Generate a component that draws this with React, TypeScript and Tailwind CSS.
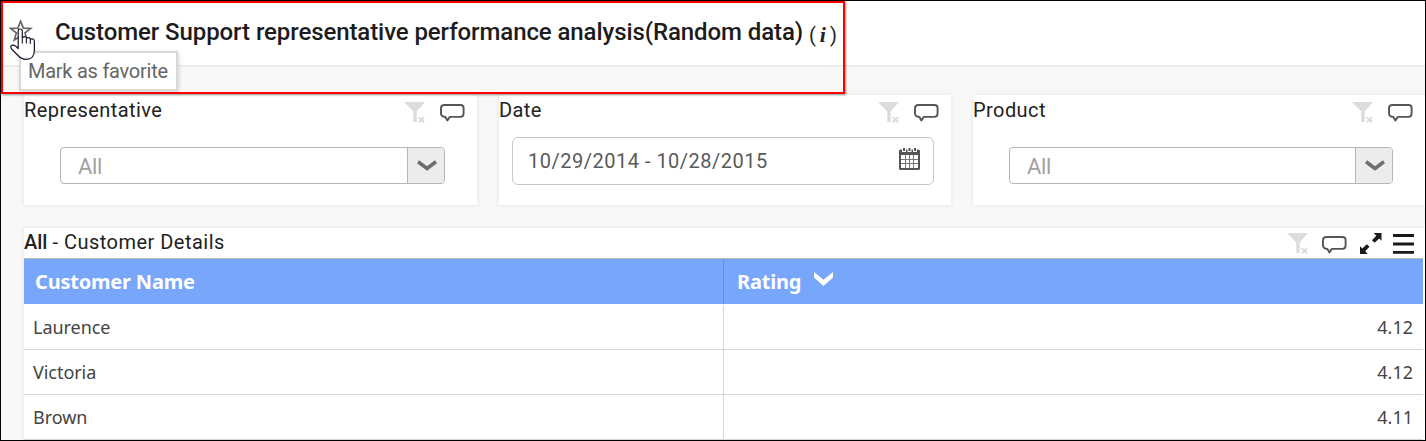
import React from "react";

const FilterOff = () => (
  <svg width="22" height="22" viewBox="0 0 22 22" className="shrink-0">
    <path d="M0 0H21L12.7 9.5V20H9.3V9.5Z" fill="#dcdcdc" />
    <path d="M14.7 15.2L20.2 20.2M20.2 15.2L14.7 20.2" stroke="#dcdcdc" strokeWidth="1.9" />
  </svg>
);

const Comment = () => (
  <svg width="25" height="18" viewBox="0 0 25 18" className="shrink-0">
    <path
      d="M4.5 1H20.5Q23.6 1 23.6 4V9.5Q23.6 12.7 20.5 12.9H9.8L7.4 16.5L5.4 13Q1 12.4 1 9.5V4Q1 1 4.5 1Z"
      fill="#fff"
      stroke="#555"
      strokeWidth="1.9"
      strokeLinejoin="round"
    />
  </svg>
);

const Calendar = () => (
  <svg width="21" height="22" viewBox="0 0 21 22" className="shrink-0">
    <path d="M0 3Q0 1.5 1.5 1.5H19.5Q21 1.5 21 3V20.5Q21 22 19.5 22H1.5Q0 22 0 20.5Z" fill="#555" />
    <path d="M2 7H19V20H2Z" fill="#fff" />
    <path d="M2 11.5H19M2 15.5H19M6.5 7V20M10.5 7V20M14.5 7V20" stroke="#777" strokeWidth="1" />
    <path d="M3 0H7V4H3ZM8.5 0H12.5V4H8.5ZM14 0H18V4H14Z" fill="#fff" />
    <path d="M4 0H6V3H4ZM9.5 0H11.5V3H9.5ZM15 0H17V3H15Z" fill="#555" />
  </svg>
);

const Chevron = () => (
  <svg width="20" height="11" viewBox="0 0 20 11">
    <path d="M1 1.8L10 8.4L19 1.8" fill="none" stroke="#6e6e6e" strokeWidth="3.6" />
  </svg>
);

const Expand = () => (
  <svg width="22" height="22" viewBox="0 0 22 22" className="shrink-0">
    <path d="M13.8 0H21.5V7.8L19.2 5.6L14.6 9.8L12 7.2L16.3 2.8Z" fill="#1a1a1a" />
    <path d="M7.7 21H0V13.2L2.3 15.4L6.9 11.2L9.5 13.8L5.2 18.2Z" fill="#1a1a1a" />
  </svg>
);

const Menu = () => (
  <svg width="21" height="20" viewBox="0 0 21 20" className="shrink-0">
    <path d="M0 1.5H21M0 10H21M0 18.4H21" stroke="#1a1a1a" strokeWidth="2.9" />
  </svg>
);

function Card({ title, children }: { title: string; children: React.ReactNode }) {
  return (
    <section className="h-[110px] bg-white shadow-[0_0_5px_rgba(0,0,0,0.09)]">
      <div className="flex h-[30px] items-center">
        <h2 className="text-[20px] tracking-[0.43px] text-[#222]">{title}</h2>
        <div className="mt-[6px] ml-auto mr-[12px] flex items-center gap-[14px]">
          <FilterOff />
          <Comment />
        </div>
      </div>
      {children}
    </section>
  );
}

function Dropdown() {
  return (
    <div className="mt-[22px] mr-[32px] ml-[36px] flex h-[37px] overflow-hidden rounded-[4px] border border-[#b5b5b5] bg-white">
      <div className="flex flex-1 items-center pt-[3px] pl-[17px] text-[22px] leading-none tracking-[-0.3px] text-[#a2a2a2]">All</div>
      <div className="flex w-[37px] items-center justify-center border-l border-[#b5b5b5] bg-[#ebecee] pl-[2px]">
        <Chevron />
      </div>
    </div>
  );
}

const rows = [
  ["Laurence", "4.12"],
  ["Victoria", "4.12"],
  ["Brown", "4.11"],
];

export default function App() {
  return (
    <div className="relative h-[441px] w-[1426px] overflow-hidden border border-black bg-[#f8f8f8] font-['Roboto',sans-serif]">
      <header className="flex h-[66px] items-center border-b-2 border-[#ececec] bg-white pl-[8px]">
        <svg width="24" height="24" viewBox="0 0 24 24" className="mb-[5px] shrink-0">
          <path d="M11.6 2.3L14.4 9.1L21.7 9.4L16 13.9L18 21L11.6 17L5.3 21L7.3 13.9L1.6 9.4L8.9 9.1Z" fill="#fff" stroke="#666" strokeWidth="1.7" />
        </svg>
        <h1 className="mb-[2px] ml-[22px] w-[750px] text-[24px] font-medium tracking-[-0.09px] whitespace-nowrap text-[#1c1c1c]">
          Customer Support representative performance analysis(Random data)
        </h1>
        <span className="mt-[3px] ml-[4px] flex items-baseline gap-[4px] text-[20px] text-[#222]">
          <span>(</span>
          <span className="font-['Liberation_Serif',serif] text-[22px] font-bold italic">i</span>
          <span>)</span>
        </span>
      </header>

      <main className="pt-[28px] pl-[23px]">
        <div className="grid grid-cols-[453px_452px_452px] gap-x-[22px]">
          <Card title="Representative"><Dropdown /></Card>
          <Card title="Date">
            <div className="mt-[12px] mr-[17px] ml-[13px] flex h-[48px] items-center rounded-[6px] border-[1.5px] border-[#c6c6c6] pr-[13px] pl-[15px]">
              <span className="flex-1 text-[20px] tracking-[0.5px] text-[#5a5a5a]">10/29/2014 - 10/28/2015</span>
              <span className="mb-[5px]"><Calendar /></span>
            </div>
          </Card>
          <Card title="Product"><Dropdown /></Card>
        </div>

        <section className="mt-[23px] bg-white shadow-[0_0_5px_rgba(0,0,0,0.09)]">
          <div className="flex h-[30px] items-center">
            <h2 className="mb-[2px] text-[20px] tracking-[0.47px] text-[#222]"><b className="font-medium tracking-[-0.1px]">All</b> - Customer Details</h2>
            <div className="mt-[2px] mr-[11px] ml-auto flex items-center">
              <FilterOff />
              <span className="mt-[2px] ml-[13px]"><Comment /></span>
              <span className="ml-[13px]"><Expand /></span>
              <span className="ml-[11px]"><Menu /></span>
            </div>
          </div>
          <div className="mr-[2px] border-t border-[#b9b9b9] font-['Noto_Sans',sans-serif]">
            <div className="grid h-[45px] grid-cols-[700px_1fr] bg-[#78a6fb] text-[20px] font-bold tracking-[-0.2px] text-white">
              <div className="flex items-center border-r border-[#658ddb] pl-[11px]">Customer Name</div>
              <div className="flex items-center pl-[13px]">
                Rating
                <svg width="19" height="14" viewBox="0 0 19 14" className="mb-[5px] ml-[13px]">
                  <path d="M0 0L9.5 7.8L19 0V5.5L9.5 14L0 5.5Z" fill="#fff" />
                </svg>
              </div>
            </div>
            <div className="pt-[1px]">
              {rows.map(([name, rating]) => (
                <div key={name} className="grid h-[45px] grid-cols-[700px_1fr] text-[18px] text-[#444]">
                  <div className="flex items-center border-r border-b border-[#d6d6d6] pl-[9px] tracking-[-0.05px]">{name}</div>
                  <div className="flex items-center justify-end border-b border-[#d6d6d6] pr-[10px]">{rating}</div>
                </div>
              ))}
            </div>
          </div>
        </section>
      </main>

      <div className="absolute top-0 left-0 h-[93px] w-[844px] border-2 border-[#f00] shadow-[1px_1px_2px_rgba(0,0,0,0.4)]" />
      <div className="absolute top-[50px] left-[18px] flex h-[40px] w-[159px] items-center border-2 border-[#d8d8d8] bg-white pl-[7px] text-[20px] tracking-[-0.25px] whitespace-nowrap text-[#666] shadow-[1px_1px_4px_rgba(0,0,0,0.15)]">
        Mark as favorite
      </div>
      <svg width="26" height="33" viewBox="0 0 26 33" className="absolute top-[27px] left-[9px]">
        <path
          d="M8.2 19V3Q8.2 1 10.2 1Q12.3 1 12.3 3V9.5Q15.8 7.6 16.4 10.2Q19.8 8.6 20.3 11.2Q24.4 9.8 24.4 14V22Q24.4 31.3 16.3 31.3Q11.5 31.3 8 27.5L1.6 21Q-.4 17.5 2.6 17.2Q5 16.8 8.2 20.5Z"
          fill="#fff"
          stroke="#17172b"
          strokeWidth="1.2"
          strokeLinejoin="round"
        />
        <path d="M12.3 9.5V15M16.4 10.2V15M20.3 11.2V15.5" stroke="#17172b" strokeWidth="1.1" strokeLinecap="round" />
      </svg>
    </div>
  );
}
